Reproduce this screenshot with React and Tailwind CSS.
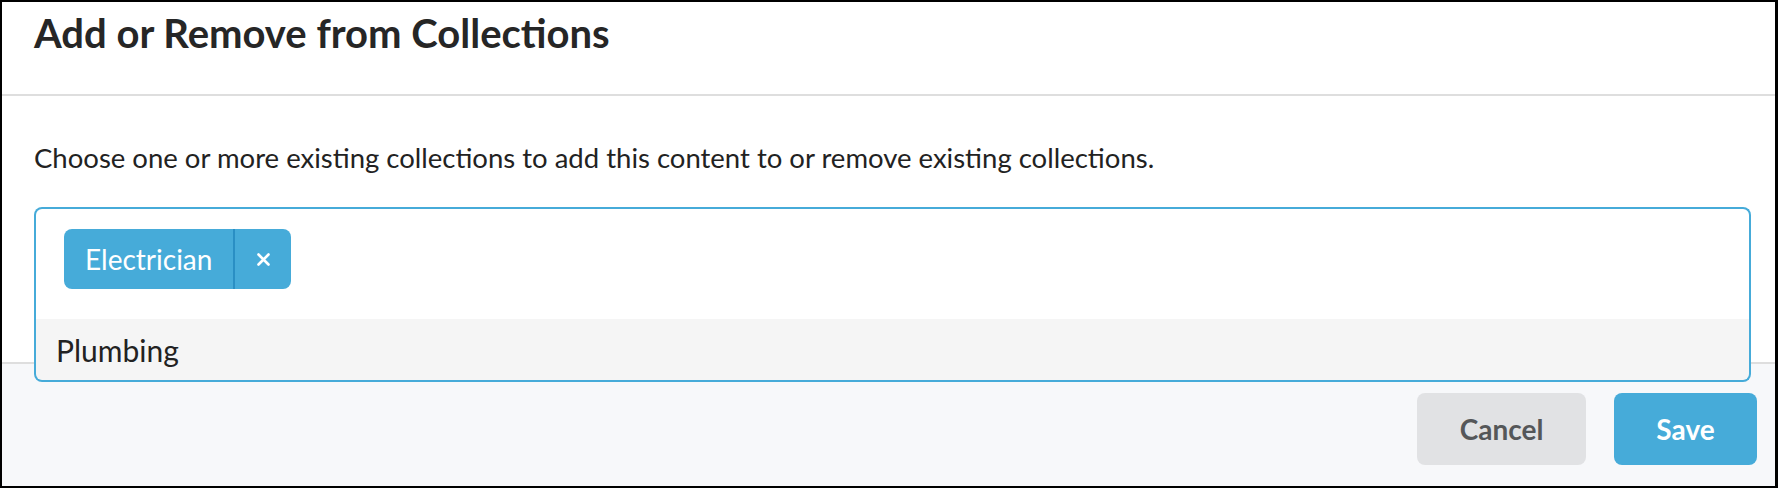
import React from "react";

const CollectionsModal = () => {
  return (
    <div className="w-[1778px] h-[488px] bg-white border-2 border-r-[3px] border-black flex flex-col overflow-hidden font-[Lato,sans-serif]">
      {/* header */}
      <div className="h-[94px] shrink-0 border-b-2 border-[#dedede] pl-[32px] pt-[7px]">
        <h2 className="text-[40px] leading-[48px] font-bold text-[#262626]">
          Add or Remove from Collections
        </h2>
      </div>

      {/* body */}
      <div className="flex-1 pl-[32px] pr-[24px] pt-[41px]">
        <p className="text-[27.5px] leading-[42px] text-[#222222]">
          Choose one or more existing collections to add this content to or remove existing collections.
        </p>

        <div className="relative mt-[28px]">
          <div className="h-[112px] border-2 border-b-0 border-[#46abd9] rounded-t-lg pt-[20px] pl-[28px] flex items-start">
            <div className="flex h-[60px] rounded-lg bg-[#46abd9] text-white overflow-hidden">
              <span className="flex items-center px-[21px] text-[28px] leading-[34px]">Electrician</span>
              <button className="w-[58px] flex items-center justify-center border-l-2 border-[#2a8fc4]">
                <svg width="13" height="13" viewBox="0 0 13 13">
                  <path d="M1.5 1.5 L11.5 11.5 M11.5 1.5 L1.5 11.5" stroke="white" strokeWidth="2.6" strokeLinecap="round" />
                </svg>
              </button>
            </div>
          </div>
          {/* open dropdown menu, overlaps footer */}
          <div className="absolute left-0 right-0 top-full z-10 h-[63px] border-2 border-t-0 border-[#46abd9] rounded-b-lg bg-[#f5f5f5] flex items-center pl-[20px]">
            <span className="text-[30px] leading-[36px] text-[#222222]">Plumbing</span>
          </div>
        </div>
      </div>

      {/* footer */}
      <div className="h-[124px] shrink-0 border-t-2 border-[#dedede] bg-[#f7f8fa] flex justify-end items-start gap-[28px] pt-[29px] pr-[18px]">
        <button className="w-[169px] h-[72px] rounded-lg bg-[#e1e2e4] text-[#555759] text-[28px] font-bold">
          Cancel
        </button>
        <button className="w-[143px] h-[72px] rounded-lg bg-[#46abd9] text-white text-[28px] font-bold">
          Save
        </button>
      </div>
    </div>
  );
};

export default function App() {
  return <CollectionsModal />;
}
